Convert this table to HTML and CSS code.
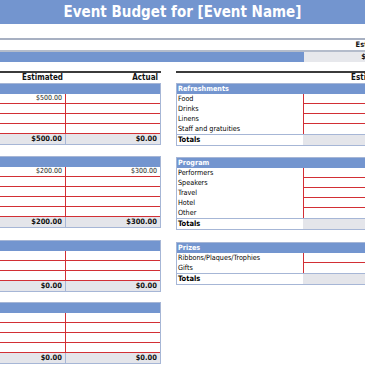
FILE: index.html
```html
<!DOCTYPE html>
<html>
<head>
<meta charset="utf-8">
<link rel="stylesheet" href="styles.css">
</head>
<body>
<div class="sheet">
  <header class="title">Event Budget for [Event Name]</header>
  <section class="summary">
    <div class="sum-row sum-head"><span></span><span class="sum-cell">Estimated</span></div>
    <div class="sum-row sum-blue"><span></span><span class="sum-cell grey">$500.00</span></div>
  </section>
  <div class="columns">
    <div class="col left">
      <div class="colhead lhead"><span>Estimated</span><span>Actual</span></div>
      <div class="ltable">
        <div class="lrow lh"></div>
        <div class="lrow"><span>$500.00</span><span></span></div>
        <div class="lrow"><span></span><span></span></div>
        <div class="lrow"><span></span><span></span></div>
        <div class="lrow"><span></span><span></span></div>
        <div class="lrow lt"><span>$500.00</span><span>$0.00</span></div>
      </div>
      <div class="ltable b2">
        <div class="lrow lh"></div>
        <div class="lrow"><span>$200.00</span><span>$300.00</span></div>
        <div class="lrow"><span></span><span></span></div>
        <div class="lrow"><span></span><span></span></div>
        <div class="lrow"><span></span><span></span></div>
        <div class="lrow"><span></span><span></span></div>
        <div class="lrow lt"><span>$200.00</span><span>$300.00</span></div>
      </div>
      <div class="ltable b3">
        <div class="lrow lh"></div>
        <div class="lrow"><span></span><span></span></div>
        <div class="lrow"><span></span><span></span></div>
        <div class="lrow"><span></span><span></span></div>
        <div class="lrow lt"><span>$0.00</span><span>$0.00</span></div>
      </div>
      <div class="ltable b4">
        <div class="lrow lh"></div>
        <div class="lrow"><span></span><span></span></div>
        <div class="lrow"><span></span><span></span></div>
        <div class="lrow"><span></span><span></span></div>
        <div class="lrow"><span></span><span></span></div>
        <div class="lrow lt"><span>$0.00</span><span>$0.00</span></div>
      </div>
    </div>
    <div class="col right">
      <div class="colhead rhead"><span></span><span>Estimated</span></div>
      <div class="rtable">
        <div class="rrow rh"><span>Refreshments</span><span></span></div>
        <div class="rrow"><span>Food</span><span></span></div>
        <div class="rrow"><span>Drinks</span><span></span></div>
        <div class="rrow"><span>Linens</span><span></span></div>
        <div class="rrow"><span>Staff and gratuities</span><span></span></div>
        <div class="rrow rt"><span>Totals</span><span></span></div>
      </div>
      <div class="rtable b2">
        <div class="rrow rh"><span>Program</span><span></span></div>
        <div class="rrow"><span>Performers</span><span></span></div>
        <div class="rrow"><span>Speakers</span><span></span></div>
        <div class="rrow"><span>Travel</span><span></span></div>
        <div class="rrow"><span>Hotel</span><span></span></div>
        <div class="rrow"><span>Other</span><span></span></div>
        <div class="rrow rt"><span>Totals</span><span></span></div>
      </div>
      <div class="rtable b3">
        <div class="rrow rh"><span>Prizes</span><span></span></div>
        <div class="rrow"><span>Ribbons/Plaques/Trophies</span><span></span></div>
        <div class="rrow"><span>Gifts</span><span></span></div>
        <div class="rrow rt"><span>Totals</span><span></span></div>
      </div>
    </div>
  </div>
</div>
</body>
</html>
```
FILE: styles.css
```css
html, body {
  margin: 0;
  padding: 0;
  background: #fff;
}
body {
  width: 365px;
  height: 365px;
  overflow: hidden;
  font-family: "DejaVu Sans Condensed", "DejaVu Sans", sans-serif;
  font-stretch: condensed;
  color: #111;
}
.sheet {
  width: 365px;
  overflow: hidden;
}
.title {
  height: 24px;
  line-height: 24px;
  background: #7395cf;
  color: #fff;
  font-weight: bold;
  font-size: 15px;
  text-align: center;
}
.summary {
  margin-top: 14px;
  width: 400px;
  border-top: 2px solid #a7b0c2;
}
.sum-row {
  display: grid;
  grid-template-columns: 304px 96px;
  height: 10px;
  font-size: 7.5px;
  line-height: 10px;
}
.sum-head {
  font-weight: bold;
  border-bottom: 2px solid #b4bccb;
}
.sum-head .sum-cell {
  text-align: right;
  padding-right: 6px;
}
.sum-blue {
  background: #7395cf;
}
.sum-cell.grey {
  background: #e7e8ec;
  text-align: right;
  padding-right: 8px;
  font-weight: bold;
}
.columns {
  display: flex;
  gap: 15px;
  margin-top: 9px;
}
.col.left {
  width: 161px;
  flex: none;
}
.col.right {
  width: 222px;
  flex: none;
}
.colhead {
  border-top: 2px solid #3b3b3b;
  height: 10px;
  line-height: 10px;
  font-weight: bold;
  font-size: 8px;
  display: grid;
}
.lhead {
  grid-template-columns: 66px 95px;
}
.lhead span {
  text-align: right;
  padding-right: 3px;
}
.rhead {
  grid-template-columns: 127px 95px;
}
.rhead span {
  text-align: right;
  padding-right: 6px;
}
.ltable, .rtable {
  border: 1px solid #a6b6d6;
}
.ltable {
  border-left: none;
}
.b2 { margin-top: 11px; }
.b3 { margin-top: 12px; }
.b4 { margin-top: 10px; }
.lrow {
  display: grid;
  grid-template-columns: 66px 1fr;
  height: 10px;
  box-sizing: border-box;
  border-bottom: 1px solid #d22f35;
  font-size: 7px;
  line-height: 9px;
}
.lrow span {
  text-align: right;
  padding-right: 3px;
  color: #222;
}
.lrow span:first-child {
  border-right: 1px solid #d22f35;
}
.lrow.lh {
  background: #7395cf;
  border-bottom: none;
}
.lrow.lt {
  background: #e4e5ea;
  border-bottom: none;
  font-weight: bold;
  font-size: 7.5px;
  line-height: 10px;
  color: #111;
}
.lrow.lt span {
  color: #111;
}
.lrow.lt span:first-child {
  border-right: 1px solid #a6b6d6;
}
.rrow {
  display: grid;
  grid-template-columns: 126px 1fr;
  height: 10px;
  font-size: 7.2px;
  line-height: 10px;
  color: #000;
}
.rrow span:first-child {
  padding-left: 1px;
  white-space: nowrap;
}
.rrow span:last-child {
  border-left: 1px solid #d22f35;
  border-bottom: 1px solid #d22f35;
  box-sizing: border-box;
}
.rrow:nth-last-child(2) span:last-child {
  border-bottom: none;
}
.rrow.rh {
  background: #7395cf;
  color: #fff;
  font-weight: bold;
}
.rrow.rh span:last-child,
.rrow.rt span:last-child {
  border: none;
}
.rrow.rt {
  border-top: 1px solid #a6b6d6;
  font-weight: bold;
  font-size: 7.5px;
}
.rrow.rt span:last-child {
  background: #e4e5ea;
}
```
